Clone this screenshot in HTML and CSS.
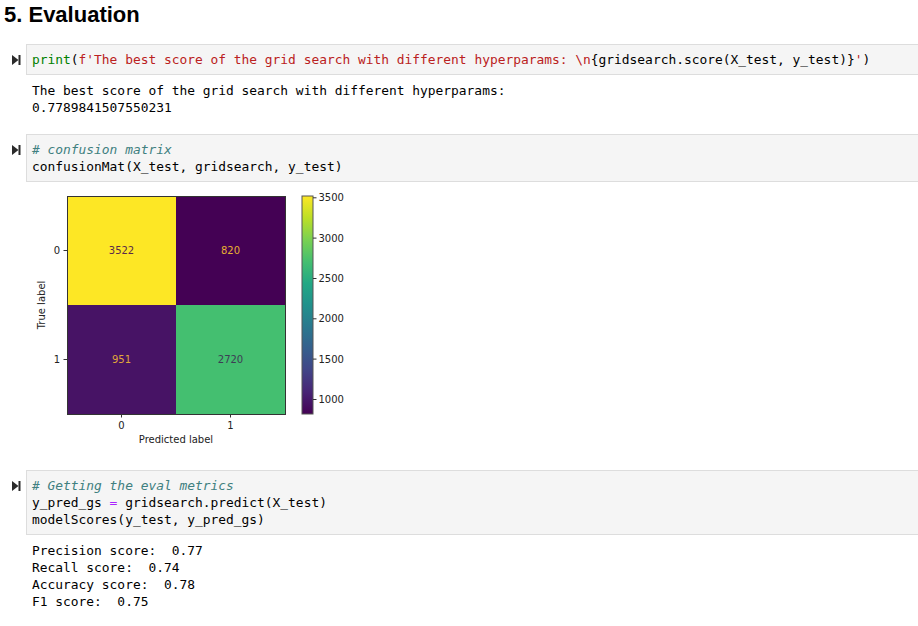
FILE: index.html
```html
<!DOCTYPE html>
<html>
<head>
<meta charset="utf-8">
<link rel="stylesheet" href="styles.css">
</head>
<body>
<div class="nb">
  <h2 class="title">5. Evaluation</h2>

  <div class="cell">
    <div class="prompt"><svg class="run" width="9" height="10" viewBox="0 0 9 10"><polygon points="0,0 6.5,5 0,10" fill="#2b2b2b"/><rect x="6.5" y="0" width="2" height="10" fill="#2b2b2b"/></svg></div>
    <div class="input"><pre><span class="bi">print</span>(<span class="st">f'The best score of the grid search with different hyperparams: \n</span>{gridsearch.score(X_test, y_test)}<span class="st">'</span>)</pre></div>
  </div>
  <div class="output"><pre>The best score of the grid search with different hyperparams: 
0.7789841507550231</pre></div>

  <div class="cell">
    <div class="prompt"><svg class="run" width="9" height="10" viewBox="0 0 9 10"><polygon points="0,0 6.5,5 0,10" fill="#2b2b2b"/><rect x="6.5" y="0" width="2" height="10" fill="#2b2b2b"/></svg></div>
    <div class="input"><pre><span class="cm"># confusion matrix</span>
confusionMat(X_test, gridsearch, y_test)</pre></div>
  </div>
  <div class="output">
    <svg class="plot" width="340" height="263" viewBox="0 0 340 263">
      <defs>
        <linearGradient id="vir" x1="0" y1="1" x2="0" y2="0">
          <stop offset="0" stop-color="#440154"/>
          <stop offset="0.1" stop-color="#482475"/>
          <stop offset="0.2" stop-color="#414487"/>
          <stop offset="0.3" stop-color="#355f8d"/>
          <stop offset="0.4" stop-color="#2a788e"/>
          <stop offset="0.5" stop-color="#21918c"/>
          <stop offset="0.6" stop-color="#22a884"/>
          <stop offset="0.7" stop-color="#44bf70"/>
          <stop offset="0.8" stop-color="#7ad151"/>
          <stop offset="0.9" stop-color="#bddf26"/>
          <stop offset="1" stop-color="#fde725"/>
        </linearGradient>
      </defs>
      <rect x="35" y="7" width="109" height="109" fill="#fde725"/>
      <rect x="144" y="7" width="109" height="109" fill="#440154"/>
      <rect x="35" y="116" width="109" height="109" fill="#471365"/>
      <rect x="144" y="116" width="109" height="109" fill="#44bf70"/>
      <rect x="35.5" y="7.5" width="218" height="218" fill="none" stroke="#333" stroke-width="1"/>
      <g class="cell-txt" text-anchor="middle" dominant-baseline="central">
        <text x="89.5" y="61.5" fill="#5a2a4a">3522</text>
        <text x="198.5" y="61.5" fill="#e8b030">820</text>
        <text x="89.5" y="170.5" fill="#e0a83a">951</text>
        <text x="198.5" y="170.5" fill="#3d3d55">2720</text>
      </g>
      <g stroke="#333" stroke-width="1">
        <line x1="31.5" y1="61.5" x2="35" y2="61.5"/>
        <line x1="31.5" y1="170.5" x2="35" y2="170.5"/>
        <line x1="89.5" y1="225" x2="89.5" y2="228.5"/>
        <line x1="198.5" y1="225" x2="198.5" y2="228.5"/>
      </g>
      <g class="ax-txt">
        <text x="28" y="61.5" text-anchor="end" dominant-baseline="central">0</text>
        <text x="28" y="170.5" text-anchor="end" dominant-baseline="central">1</text>
        <text x="89.5" y="236" text-anchor="middle" dominant-baseline="central">0</text>
        <text x="198.5" y="236" text-anchor="middle" dominant-baseline="central">1</text>
        <text x="144" y="250" text-anchor="middle" dominant-baseline="central">Predicted label</text>
        <text transform="translate(9.7,116) rotate(-90)" text-anchor="middle" dominant-baseline="central">True label</text>
      </g>
      <rect x="270" y="7" width="11" height="218" fill="url(#vir)"/>
      <rect x="270" y="7" width="11" height="218" fill="none" stroke="#555" stroke-width="1"/>
      <g stroke="#333" stroke-width="1">
        <line x1="281" y1="8.8" x2="284.5" y2="8.8"/>
        <line x1="281" y1="49.1" x2="284.5" y2="49.1"/>
        <line x1="281" y1="89.5" x2="284.5" y2="89.5"/>
        <line x1="281" y1="129.8" x2="284.5" y2="129.8"/>
        <line x1="281" y1="170.1" x2="284.5" y2="170.1"/>
        <line x1="281" y1="210.5" x2="284.5" y2="210.5"/>
      </g>
      <g class="ax-txt" dominant-baseline="central">
        <text x="286.5" y="8.8">3500</text>
        <text x="286.5" y="49.1">3000</text>
        <text x="286.5" y="89.5">2500</text>
        <text x="286.5" y="129.8">2000</text>
        <text x="286.5" y="170.1">1500</text>
        <text x="286.5" y="210.5">1000</text>
      </g>
    </svg>
  </div>

  <div class="cell">
    <div class="prompt"><svg class="run" width="9" height="10" viewBox="0 0 9 10"><polygon points="0,0 6.5,5 0,10" fill="#2b2b2b"/><rect x="6.5" y="0" width="2" height="10" fill="#2b2b2b"/></svg></div>
    <div class="input"><pre><span class="cm"># Getting the eval metrics</span>
y_pred_gs <span class="op">=</span> gridsearch.predict(X_test)
modelScores(y_test, y_pred_gs)</pre></div>
  </div>
  <div class="output"><pre>Precision score:  0.77
Recall score:  0.74
Accuracy score:  0.78
F1 score:  0.75</pre></div>
</div>
</body>
</html>
```

FILE: styles.css
```css
html, body {
  margin: 0;
  padding: 0;
  background: #fff;
  overflow: hidden;
}
.nb {
  width: 940px;
}
.title {
  margin: 0;
  padding-left: 4px;
  font-family: "Liberation Sans", Arial, sans-serif;
  font-weight: bold;
  font-size: 22px;
  line-height: 30px;
  color: #000;
  margin-bottom: 14px;
}
pre {
  margin: 0;
  font-family: "DejaVu Sans Mono", "Liberation Mono", monospace;
  font-size: 12.9px;
  line-height: 17px;
  color: #000;
  white-space: pre;
}
.cell {
  display: flex;
  align-items: flex-start;
}
.prompt {
  width: 26px;
  flex: none;
  display: flex;
  justify-content: flex-start;
  padding-left: 12px;
  padding-top: 11px;
  box-sizing: border-box;
}
.run {
  display: block;
}
.input {
  flex: 1;
  background: #f5f5f5;
  border: 1px solid #dddddd;
  padding: 6px 5px;
}
.output {
  padding: 7px 0 0 32px;
  margin-bottom: 18px;
}
.plot {
  display: block;
}
.bi { color: #008000; }
.st { color: #ba2121; }
.cm { color: #408080; font-style: italic; }
.op { color: #aa22ff; }
.cell-txt text {
  font-family: "DejaVu Sans", sans-serif;
  font-size: 10px;
}
.ax-txt text, .ax-txt {
  font-family: "DejaVu Sans", sans-serif;
  font-size: 10px;
  fill: #222;
}
```
